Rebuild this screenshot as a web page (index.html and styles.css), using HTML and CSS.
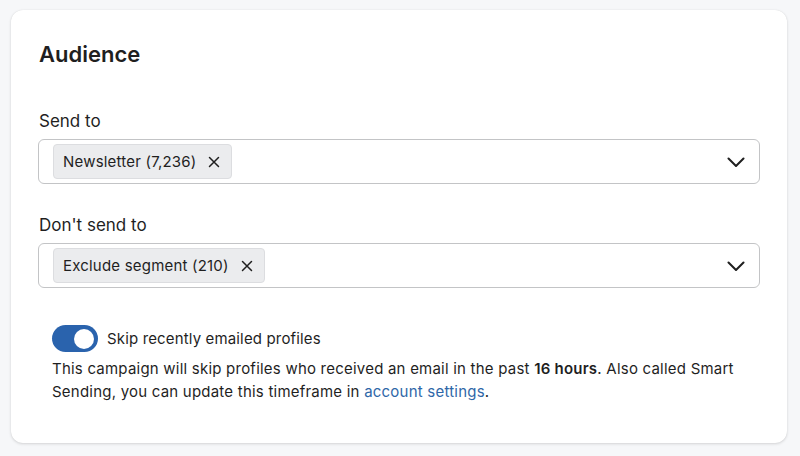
FILE: index.html
```html
<!DOCTYPE html>
<html lang="en">
<head>
<meta charset="utf-8">
<link rel="stylesheet" href="styles.css">
</head>
<body>
<section class="card">
  <h2 class="title">Audience</h2>
  <div class="field">
    <label class="label">Send to</label>
    <div class="select">
      <span class="chip">Newsletter (7,236)
        <svg class="x" viewBox="0 0 12 12" width="12" height="12"><path d="M1.5 1.5l9 9M10.5 1.5l-9 9" stroke="#1f1f1f" stroke-width="1.5" stroke-linecap="round"/></svg>
      </span>
      <svg class="chev" viewBox="0 0 18 10" width="18" height="10"><path d="M1.5 1.5l7.5 7.5 7.5-7.5" fill="none" stroke="#1f1f1f" stroke-width="2" stroke-linecap="round" stroke-linejoin="round"/></svg>
    </div>
  </div>
  <div class="field">
    <label class="label">Don't send to</label>
    <div class="select">
      <span class="chip">Exclude segment (210)
        <svg class="x" viewBox="0 0 12 12" width="12" height="12"><path d="M1.5 1.5l9 9M10.5 1.5l-9 9" stroke="#1f1f1f" stroke-width="1.5" stroke-linecap="round"/></svg>
      </span>
      <svg class="chev" viewBox="0 0 18 10" width="18" height="10"><path d="M1.5 1.5l7.5 7.5 7.5-7.5" fill="none" stroke="#1f1f1f" stroke-width="2" stroke-linecap="round" stroke-linejoin="round"/></svg>
    </div>
  </div>
  <div class="smart">
    <div class="toggle-row">
      <span class="toggle"><span class="knob"></span></span>
      <span class="toggle-label">Skip recently emailed profiles</span>
    </div>
    <p class="desc">This campaign will skip profiles who received an email in the past <b>16 hours</b>. Also called Smart Sending, you can update this timeframe in <a href="#">account settings</a>.</p>
  </div>
</section>
</body>
</html>
```
FILE: styles.css
```css
html, body {
  margin: 0;
  background: #f6f7f9;
}
body {
  padding: 10px 13px 13px 11px;
  font-family: Inter, "Noto Sans", sans-serif;
  color: #1f1f1f;
}
.card {
  background: #fff;
  border-radius: 12px;
  box-shadow: 0 1px 3px rgba(0,0,0,0.14), 0 0 1px rgba(0,0,0,0.1);
  padding: 30px 27px 40px 27px;
  height: 433px;
  box-sizing: border-box;
}
.title {
  margin: 0 0 0 1px;
  font-size: 22px;
  line-height: 29px;
  font-weight: 600;
}
.field {
  margin-top: 40px;
}
.field + .field {
  margin-top: 29px;
}
.label {
  display: block;
  font-size: 17px;
  line-height: 24px;
  margin: 0 0 6px 1px;
}
.select {
  height: 45px;
  box-sizing: border-box;
  border: 1px solid #c3c4c6;
  border-radius: 6px;
  display: flex;
  align-items: center;
  justify-content: space-between;
  padding: 0 14px 0 14px;
}
.chip {
  display: inline-flex;
  align-items: center;
  gap: 12px;
  height: 35px;
  box-sizing: border-box;
  padding: 0 11px 0 9px;
  background: #ebecee;
  border: 1px solid #dcdde0;
  border-radius: 4px;
  font-size: 15px;
  letter-spacing: 0.2px;
}
.chev {
  display: block;
}
.smart {
  margin-top: 37px;
  padding-left: 14px;
}
.toggle-row {
  display: flex;
  align-items: center;
  gap: 9px;
}
.toggle {
  width: 46px;
  height: 27px;
  border-radius: 14px;
  background: #2a63ad;
  position: relative;
  flex: none;
}
.knob {
  position: absolute;
  right: 4px;
  top: 3.5px;
  width: 20px;
  height: 20px;
  border-radius: 50%;
  background: #fff;
}
.toggle-label {
  font-size: 15px;
  letter-spacing: 0.15px;
}
.desc {
  margin: 5px 0 0 0;
  font-size: 15px;
  line-height: 23px;
  letter-spacing: 0.22px;
}
.desc b {
  font-weight: 600;
}
.desc a {
  color: #2f67a8;
  text-decoration: none;
}
```
